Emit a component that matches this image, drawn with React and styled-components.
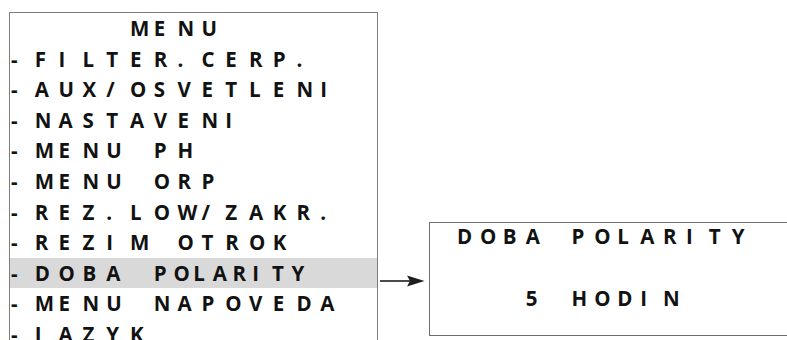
import React from "react";
import styled, { createGlobalStyle } from "styled-components";

const GlobalStyle = createGlobalStyle`
  html, body {
    margin: 0;
    padding: 0;
    background: #ffffff;
    overflow: hidden;
  }
`;

const Page = styled.div`
  display: flex;
  flex-direction: row;
  align-items: flex-start;
  width: 787px;
  height: 340px;
  overflow: hidden;
  padding-left: 9px;
  box-sizing: border-box;
  font-family: "Open Sans", Lato, sans-serif;
  font-weight: 700;
  font-size: 20.5px;
  color: #121212;
`;

const MenuBox = styled.div`
  flex-shrink: 0;
  width: 369px;
  margin-top: 12px;
  box-sizing: border-box;
  border: 1px solid #7d7d7d;
  border-bottom: none;
  padding-left: 1px;
  background: #ffffff;
`;

const Row = styled.div`
  display: flex;
  align-items: center;
  height: ${(p) => p.$height}px;
  line-height: ${(p) => p.$height}px;
  background: ${(p) => (p.$active ? "#d9d9d9" : "transparent")};
  margin-left: ${(p) => (p.$active ? "-1px" : "0")};
  padding-left: ${(p) => (p.$active ? "1px" : "0")};
`;

const Glyph = styled.span`
  display: inline-block;
  flex-shrink: 0;
  width: ${(p) => p.$pitch}px;
  white-space: pre;
`;

const ArrowWrap = styled.div`
  flex-shrink: 0;
  width: 51px;
  height: 12px;
  margin-top: 265px;
`;

const Screen = styled.div`
  flex-shrink: 0;
  width: 420px;
  height: 114px;
  margin-top: 222px;
  box-sizing: border-box;
  border: 1px solid #6f6f6f;
  padding-left: 27px;
  display: flex;
  flex-direction: column;
  gap: 36px;
`;

// each character sits in its own cell; a word can ask for a tighter pitch
const Line = ({ text, pitch, pitches = [], height, active }) => {
  const cells = [];
  let word = -1;
  let inWord = false;
  text.split("").forEach((ch, i) => {
    if (ch === " ") {
      inWord = false;
      cells.push({ ch, w: pitch, i });
      return;
    }
    if (!inWord) {
      word += 1;
      inWord = true;
    }
    cells.push({ ch, w: pitches[word] || pitch, i });
  });
  return (
    <Row $height={height} $active={active}>
      {cells.map((c) => (
        <Glyph key={c.i} $pitch={c.w}>
          {c.ch}
        </Glyph>
      ))}
    </Row>
  );
};

const menu = [
  { text: "     MENU" },
  { text: "-FILTER.CERP." },
  { text: "-AUX/OSVETLENI" },
  { text: "-NASTAVENI" },
  { text: "-MENU PH" },
  { text: "-MENU ORP" },
  { text: "-REZ.LOW/ZAKR." },
  { text: "-REZIM OTROK" },
  { text: "-DOBA POLARITY", pitches: [23.8, 19.7, 21.8], active: true },
  { text: "-MENU NAPOVEDA" },
  { text: "-JAZYK" },
];

const Arrow = () => (
  <svg width="51" height="12" viewBox="0 0 51 12">
    <line x1="2" y1="6" x2="34" y2="6" stroke="#1e1e1e" strokeWidth="1.6" />
    <polygon points="29,0.5 46.5,6 29,11.5 32,6" fill="#1e1e1e" />
  </svg>
);

const App = () => {
  return (
    <Page>
      <GlobalStyle />
      <MenuBox>
        {menu.map((m, i) => (
          <Line
            key={i}
            text={m.text}
            pitch={23.8}
            pitches={m.pitches}
            height={30.6}
            active={m.active}
          />
        ))}
      </MenuBox>
      <ArrowWrap>
        <Arrow />
      </ArrowWrap>
      <Screen>
        <Line text="DOBA POLARITY" pitch={22.9} height={26} />
        <Line text="   5 HODIN" pitch={22.9} height={26} />
      </Screen>
    </Page>
  );
};

export default App;
